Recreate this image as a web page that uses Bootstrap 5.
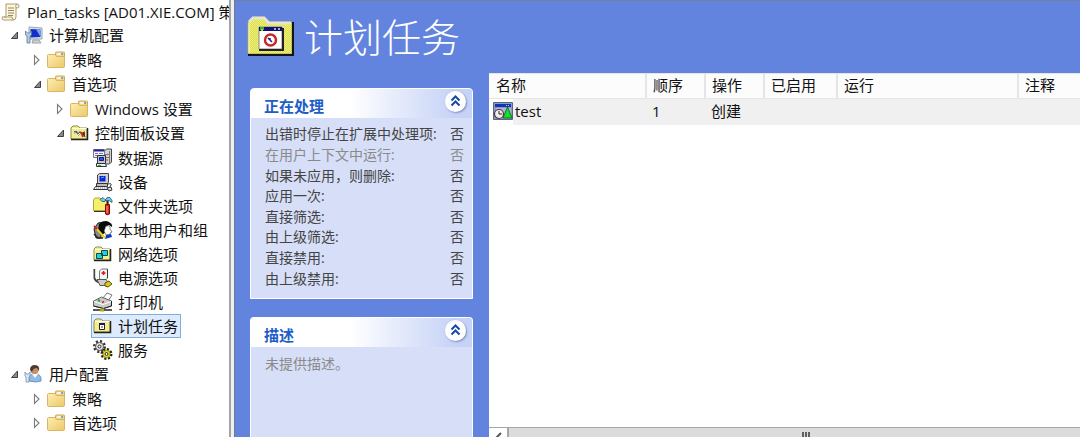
<!DOCTYPE html>
<html lang="zh-CN">
<head>
<meta charset="utf-8">
<meta name="viewport" content="width=device-width, initial-scale=1">
<title>计划任务</title>
<link rel="stylesheet" href="https://cdn.jsdelivr.net/npm/bootstrap@5.3.0/dist/css/bootstrap.min.css">
<script src="https://cdn.jsdelivr.net/npm/bootstrap@5.3.0/dist/js/bootstrap.bundle.min.js"></script>
<style>
  body { font-family: "Open Sans", "Noto Sans CJK SC", sans-serif; font-size: 15px; line-height: 20px; color: #111; background: #fff; }
  .console { height: 100vh; }

  /* navigation tree */
  .tree-pane { width: 229px; }
  .tree-root { height: 23px; padding-left: 1px; }
  .tree-root a { gap: 6px; }
  .branch { padding-left: 23px; padding-top: 1px; }
  .tree-top { padding-left: 7px; }
  .node { height: 24px; }
  .node a, .tree-root a { color: inherit; text-decoration: none; white-space: nowrap; }
  .node a { gap: 5px; height: 24px; padding: 0 2px 0 1px; border: 1px solid transparent; }
  .node a.current { background: #dcebfd; border-color: #84acdd; }
  .node svg.ico, .tree-root svg { width: 20px; height: 20px; flex: none; }
  .twist { width: 15px; height: 20px; flex: none; line-height: 0; }
  .split { width: 6px; background: #f0f0f0; border-left: 2px solid #a0a3a8; border-right: 1px solid #74787f; }

  /* extension view */
  .view { background: #6384de; border-top: 1px solid #75809f; }
  .view-head { height: 72px; padding-left: 12px; gap: 9px; }
  .view-head h1 { font-size: 39px; line-height: 48px; color: #fff; font-weight: 300; }
  .side { width: 254px; padding: 15px 16px 0 15px; gap: 18px; }
  .pane { background: #d6dff7; border: 1px solid #fff; border-radius: 4px 4px 0 0; }
  .pane-head { height: 29px; padding: 2px 6px 0 13px; background: linear-gradient(90deg, #fff 45%, #c6d3f7 92%); border-radius: 3px 3px 0 0; }
  .pane-head h2 { font-size: 15px; line-height: 20px; font-weight: 700; color: #215dc6; padding-top: 5px; }
  .fold { width: 21px; height: 21px; background: #fff; border-radius: 50%; box-shadow: 1px 1px 2px #7f8fbd; line-height: 0; }
  .props { height: 165px; margin: 6px 0 9px; font-size: 14px; line-height: 20px; color: #444; }
  .props th, .props td { padding: 0; font-weight: 400; }
  .props th { padding-left: 14px; white-space: nowrap; }
  .props td { width: 22px; }
  .muted { color: #8a8a8a; }
  .note { font-size: 14px; padding: 7px 14px; }

  /* item list */
  .items { background: #fff; min-width: 0; overflow: hidden; }
  .grid-list { table-layout: fixed; width: 100%; white-space: nowrap; }
  .grid-list th { height: 25px; padding: 0 6px 1px; line-height: 19px; font-weight: 400; background: #fcfcfc; border-top: 1px solid #e5e5e5; border-bottom: 1px solid #e5e5e5; border-right: 2px solid #e5e5e5; }
  .grid-list td { height: 26px; padding: 0 6px 2px; background: #f0f0f0; }
  .grid-list td.item-name { padding: 0 0 1px 4px; background: linear-gradient(90deg, #fff 24px, #f0f0f0 24px); }
  .grid-list td.item-name a { gap: 2px; }
  .grid-list th:first-child { padding-left: 7px; }
  .grid-list th:last-child { border-right: 0; }
  .c-name { width: 157px; } .c-num { width: 59px; } .c-on { width: 73px; } .c-run { width: 181px; }
  .hscroll { height: 10px; border-top: 1px solid #a6a6a6; background: #dcdcdc; overflow: hidden; }
  .hscroll button { width: 20px; background: #fff; line-height: 0; border-right: 2px solid #a6a6a6; }
  .scroll-thumb { padding-left: 24px; }
  .grip { width: 9px; height: 5px; background: repeating-linear-gradient(90deg, #606060 0 2px, #dcdcdc 2px 3px); }
</style>
</head>
<body>
<svg width="0" height="0" class="position-absolute" aria-hidden="true">
  <defs>
    <linearGradient id="gold" x1="0" y1="0" x2="1" y2="1"><stop offset="0" stop-color="#fdeeb0"/><stop offset="1" stop-color="#ecc869"/></linearGradient>
    <symbol id="folder" viewBox="0 0 20 20">
      <path d="M8.500 7V3q0-1 1-1h7q1 0 1 1v5h-9z" fill="#f0d68c" stroke="#cda95a"/><path d="M10 4h4" stroke="#fff" stroke-width="1.400"/><path d="M14 4h2" stroke="#4b9ad8" stroke-width="1.400"/>
      <path d="M.5 5.500q0-1 1-1H8l1.500 2h8v10q0 1-1 1h-15q-1 0-1-1z" fill="url(#gold)" stroke="#d9b566"/>
    </symbol>
    <symbol id="open" viewBox="0 0 12 20"><path d="M8.500 7v6.500H2.500z" fill="#8a8a8a" stroke="#404040"/></symbol>
    <symbol id="shut" viewBox="0 0 12 20"><path d="M2.500 5.500v9L7 10z" fill="#fff" stroke="#7a7a7a" stroke-width="1.100"/></symbol>
    <symbol id="yellow" viewBox="0 0 20 20">
      <path d="M1 16V5l2-2h5l2 2h7v11z" fill="#f1ee8e" stroke="#8d8b55"/><path d="M2 5.500h15" stroke="#fffff0"/><path d="M1 16.500h16.500V5" fill="none" stroke="#222" stroke-width="1.500"/>
    </symbol>
    <symbol id="chev" viewBox="0 0 21 21"><path d="M6.500 9.500l4-4 4 4M6.500 14.500l4-4 4 4" fill="none" stroke="#1749a8" stroke-width="2"/></symbol>
  </defs>
</svg>

<div class="console d-flex overflow-hidden">
  <nav class="tree-pane flex-shrink-0 overflow-hidden" aria-label="控制台树">
    <div class="tree-root d-flex align-items-center">
      <a href="#" class="d-flex align-items-center">
        <svg viewBox="0 0 20 20"><path d="M5 2h11q2 0 2 2t-2 2h-1v9q0 3-3 3H3q-2 0-2-2t2-1h2z" fill="#fff6d6" stroke="#a99b78"/><path d="M15 6q-1-3 1-4M3 15h8q0 3 2 3" fill="none" stroke="#a99b78"/><path d="M7 6h6M7 8.500h6M7 11h6M7 13.500h5" stroke="#8f8776"/></svg>
        <span>Plan_tasks [AD01.XIE.COM] 策略</span></a>
    </div>
    <ul class="tree-top list-unstyled mb-0">
      <li>
        <div class="node d-flex align-items-center"><button class="twist btn p-0 border-0" aria-label="折叠"><svg width="12" height="20"><use href="#open"/></svg></button>
          <a href="#" class="d-flex align-items-center"><svg class="ico" viewBox="0 0 20 20"><path d="M5 2l13 1v11l-13 0z" fill="#dce3ea" stroke="#9aa5b2"/><path d="M6.500 4l10 .6V12l-10 .4z" fill="#1330c8"/><path d="M12 4.300l4.500.3V12z" fill="#7aa5f4"/><path d="M9 15h6l2 3H8z" fill="#ccd1d8" stroke="#9da4ad"/><path d="M1.500 6v4l1.500 1v7h3v-7l1.500-1V6L5.500 8h-2z" fill="#b4cde2" stroke="#557799" stroke-width=".8"/></svg>计算机配置</a></div>
        <ul class="branch list-unstyled">
          <li class="node d-flex align-items-center"><button class="twist btn p-0 border-0" aria-label="展开"><svg width="12" height="20"><use href="#shut"/></svg></button><a href="#" class="d-flex align-items-center"><svg class="ico"><use href="#folder"/></svg>策略</a></li>
          <li>
            <div class="node d-flex align-items-center"><button class="twist btn p-0 border-0" aria-label="折叠"><svg width="12" height="20"><use href="#open"/></svg></button><a href="#" class="d-flex align-items-center"><svg class="ico"><use href="#folder"/></svg>首选项</a></div>
            <ul class="branch list-unstyled">
              <li class="node d-flex align-items-center"><button class="twist btn p-0 border-0" aria-label="展开"><svg width="12" height="20"><use href="#shut"/></svg></button><a href="#" class="d-flex align-items-center"><svg class="ico"><use href="#folder"/></svg>Windows 设置</a></li>
              <li>
                <div class="node d-flex align-items-center"><button class="twist btn p-0 border-0" aria-label="折叠"><svg width="12" height="20"><use href="#open"/></svg></button><a href="#" class="d-flex align-items-center"><svg class="ico" viewBox="0 0 20 20"><use href="#yellow"/><path d="M4 8h3l1 2 2-2 2 2 3-2v4l-2 1-2-3-3 3-1-3-3 1z" fill="#5b5b52"/><path d="M11 9l2 5" stroke="#d22" stroke-width="2"/><path d="M4 10h2M7 13l3-3" stroke="#fff"/><path d="M13 9l2 5" stroke="#222"/></svg>控制面板设置</a></div>
                <ul class="branch list-unstyled">
                  <li class="node d-flex align-items-center"><span class="twist"></span><a href="#" class="d-flex align-items-center"><svg class="ico" viewBox="0 0 20 20"><path d="M11.500 3l2-2h5v13l-2 2h-5z" fill="#d4d4d4" stroke="#444"/><path d="M12 6.500h4M12 9.500h4" stroke="#777"/><path d="M16.500 3v12" stroke="#777"/><path d="M13 12h2" stroke="#d22"/><path d="M.5 1.500h11v8H.5z" fill="#f4f4f4" stroke="#778"/><path d="M1 2.500h10" stroke="#2222a8" stroke-width="2"/><path d="M2 5.500h3m1 0h4M2 7.500h3" stroke="#77b"/><path d="M4.500 7.500h8v8h-8z" fill="#c8c8c8" stroke="#333"/><path d="M6.500 9.500h4v3h-4z" fill="#16d" stroke="#11a"/><path d="M3.500 15.500h9l1 3h-10z" fill="#eee" stroke="#333"/><path d="M5 17.500h3" stroke="#0b0"/></svg>数据源</a></li>
                  <li class="node d-flex align-items-center"><span class="twist"></span><a href="#" class="d-flex align-items-center"><svg class="ico" viewBox="0 0 20 20"><path d="M4.500 3l2-1.500h9v9l-2 1.500h-9z" fill="#d0d0d0" stroke="#444"/><path d="M6.500 4h6v5.500h-6z" fill="#1122dd"/><path d="M8 6l3-1" stroke="#35c8ef"/><path d="M3.500 11.500h11v3h-11z" fill="#bbb" stroke="#333"/><path d="M2.500 14.500h11l2 3H.5z" fill="#eee" stroke="#333"/><path d="M3 16h9" stroke="#888" stroke-dasharray="1 1"/><path d="M15 12q4-1 3 1t-2 3" fill="none" stroke="#333"/><path d="M14 16l4-1 1 3-3 1z" fill="#ddd" stroke="#333"/></svg>设备</a></li>
                  <li class="node d-flex align-items-center"><span class="twist"></span><a href="#" class="d-flex align-items-center"><svg class="ico" viewBox="0 0 20 20"><path d="M.5 14.500V4l1.500-2h5l2 2h6v10.500z" fill="#f5ef6a" stroke="#b5a63c"/><path d="M1 15.500h12" stroke="#333"/><path d="M7 3.500l3-2 2 2h1l1-2h3l2 3v2l-3-2h-4v1H9z" fill="#7fc4e2" stroke="#155b80" stroke-width=".8"/><path d="M14.500 5v4" stroke="#222" stroke-width="2"/><path d="M12.500 8.500h4v9.500q-2 1.500-4 0z" fill="#e32616" stroke="#7d0b05"/><path d="M14 10v7" stroke="#ff9d91"/></svg>文件夹选项</a></li>
                  <li class="node d-flex align-items-center"><span class="twist"></span><a href="#" class="d-flex align-items-center"><svg class="ico" viewBox="0 0 20 20"><path d="M1 9l4-6 6-1-3 7v9H3z" fill="#888" stroke="#222"/><path d="M6 4q5-5 10-2 4 2 3 5l-3-2-4 2 1 5-4 3-4-4z" fill="#090909"/><path d="M13 6q5-1 4 3l2 3-2 1v2h-4l-2-4z" fill="#fff" stroke="#333" stroke-width=".6"/><path d="M13 15l5-1 1 3-7 2z" fill="#1538b5"/><path d="M3 8l9 10" stroke="#e9d61b" stroke-width="2"/><path d="M1 6l3 3" stroke="#d71d1d" stroke-width="2"/><path d="M1 14l4 4h5" fill="none" stroke="#222" stroke-width="1.500"/></svg>本地用户和组</a></li>
                  <li class="node d-flex align-items-center"><span class="twist"></span><a href="#" class="d-flex align-items-center"><svg class="ico" viewBox="0 0 20 20"><use href="#yellow"/><path d="M8.500 6.500h6v5h-6zM3.500 9.500h6v5h-6z" fill="#19d5e3" stroke="#17434a"/></svg>网络选项</a></li>
                  <li class="node d-flex align-items-center"><span class="twist"></span><a href="#" class="d-flex align-items-center"><svg class="ico" viewBox="0 0 20 20"><path d="M1.500 1v9q1 4 5 4" fill="none" stroke="#444" stroke-width="2"/><path d="M2.500 1v9" stroke="#ddd"/><path d="M6.500 3l2-2h6v9l-2 2h-6z" fill="#f4f4f4" stroke="#777"/><path d="M14.500 1v9" stroke="#333"/><path d="M8.500 5h4M10.500 3v4" stroke="#e01414" stroke-width="1.500"/><path d="M4 11.500h9l2 3-3 3H7z" fill="#ccc" stroke="#555"/><path d="M12 15l4-2 3 3-4 3-3-1z" fill="#d8c91f" stroke="#5d5709"/></svg>电源选项</a></li>
                  <li class="node d-flex align-items-center"><span class="twist"></span><a href="#" class="d-flex align-items-center"><svg class="ico" viewBox="0 0 20 20"><path d="M10 6l4-5 5 2-4 6z" fill="#fff" stroke="#777"/><path d="M.5 9l8-4 10 4v5l-8 2.500-10-2.500z" fill="#c9c9c9" stroke="#666"/><path d="M1 9.500l9 3 8-3" fill="none" stroke="#fff"/><path d="M.5 14l10 2.500 8-2.500V9" fill="none" stroke="#222"/><path d="M5 8l2 1" stroke="#19b32a" stroke-width="2"/><path d="M9 10.500l2-1" stroke="#d22" stroke-width="1.500"/><path d="M0 18h19" stroke="#222" stroke-width="1.500"/><path d="M7 18h4" stroke="#a8ad12" stroke-width="3"/></svg>打印机</a></li>
                  <li class="node d-flex align-items-center"><span class="twist"></span><a href="#" class="current d-flex align-items-center" aria-current="page"><svg class="ico" viewBox="0 0 20 20"><use href="#yellow"/><path d="M6.500 7.500h5v6h-5z" fill="#fff" stroke="#222"/><path d="M6 8h6" stroke="#14148c" stroke-width="2"/><path d="M8 10h2v2H8z" fill="#d88"/></svg>计划任务</a></li>
                  <li class="node d-flex align-items-center"><span class="twist"></span><a href="#" class="d-flex align-items-center"><svg class="ico" viewBox="0 0 20 20"><circle cx="6.500" cy="6.500" r="5" fill="#eee" stroke="#333" stroke-width="3" stroke-dasharray="2 1.900"/><circle cx="6.500" cy="6.500" r="4" fill="#e6e6e6" stroke="#555"/><circle cx="6.500" cy="6.500" r="1.500" fill="#fff" stroke="#222"/><circle cx="13.500" cy="14" r="4.500" fill="#e7df2c" stroke="#222" stroke-width="3" stroke-dasharray="2 1.500"/><circle cx="13.500" cy="14" r="3.500" fill="#efe73a" stroke="#a39b18"/><circle cx="13.500" cy="14" r="1.500" fill="#fff" stroke="#222"/></svg>服务</a></li>
                </ul>
              </li>
            </ul>
          </li>
        </ul>
      </li>
      <li>
        <div class="node d-flex align-items-center"><button class="twist btn p-0 border-0" aria-label="折叠"><svg width="12" height="20"><use href="#open"/></svg></button>
          <a href="#" class="d-flex align-items-center"><svg class="ico" viewBox="0 0 20 20"><path d="M5 17v-3q0-4 6-4 6 0 6 5v2q-5 2-12 0z" fill="#8fbbe8" stroke="#6c97c5"/><path d="M8 10l3 4 3-4z" fill="#fff"/><circle cx="10.500" cy="6" r="4" fill="#c88f66"/><path d="M6 6q0-5 5-5t4 6l-2-3q-4 0-5 4z" fill="#4b3a31"/><path d="M1 8v4l1 1v5h3v-5l1-1V8l-1.500 2h-2z" fill="#dbe6ee" stroke="#7891a7" stroke-width=".8"/></svg>用户配置</a></div>
        <ul class="branch list-unstyled">
          <li class="node d-flex align-items-center"><button class="twist btn p-0 border-0" aria-label="展开"><svg width="12" height="20"><use href="#shut"/></svg></button><a href="#" class="d-flex align-items-center"><svg class="ico"><use href="#folder"/></svg>策略</a></li>
          <li class="node d-flex align-items-center"><button class="twist btn p-0 border-0" aria-label="展开"><svg width="12" height="20"><use href="#shut"/></svg></button><a href="#" class="d-flex align-items-center"><svg class="ico"><use href="#folder"/></svg>首选项</a></li>
        </ul>
      </li>
    </ul>
  </nav>
  <div class="split flex-shrink-0"></div>

  <main class="view d-flex flex-column flex-grow-1 overflow-hidden">
    <header class="view-head d-flex align-items-center flex-shrink-0">
      <svg width="48" height="42" viewBox="0 0 48 42" aria-hidden="true">
        <defs><pattern id="dots" width="2" height="2" patternUnits="userSpaceOnUse"><path d="M0 0h2v2H0z" fill="#eef07c"/><path d="M0 0h1v1H0zM1 1h1v1H1z" fill="#dcdc50"/></pattern></defs>
        <path d="M1 38V6l3-3 2-2h11l5 5h23v32z" fill="url(#dots)" stroke="#a2a25c"/>
        <path d="M2 6l4-4h11l5 5h22" fill="none" stroke="#e4e4d0" stroke-width="3"/><path d="M2 7v30" stroke="#f7f7cf"/><path d="M1 39h45V6" fill="none" stroke="#151515" stroke-width="2"/>
        <path d="M12 11h23v22H12z" fill="#fff" stroke="#888"/><path d="M12 34h24V12" fill="none" stroke="#222" stroke-width="2"/>
        <path d="M12 11h23v4H12z" fill="#10107c"/><path d="M13 11h4v3h-4z" fill="#28b54a"/><path d="M14 13h2v2h-2z" fill="#e7b91f"/><path d="M27 13h2m2 0h2" stroke="#aab" stroke-width="2"/>
        <circle cx="23.500" cy="24" r="5.500" fill="#fff" stroke="#c52a2a" stroke-width="2.500"/><path d="M21 22l4 4M23 22v2" stroke="#182a90" stroke-width="1.500"/>
      </svg>
      <h1 class="mb-0">计划任务</h1>
    </header>
    <div class="d-flex flex-grow-1 overflow-hidden">
      <aside class="side d-flex flex-column flex-shrink-0">
        <section class="pane">
          <div class="pane-head d-flex justify-content-between align-items-start"><h2 class="mb-0">正在处理</h2><button class="fold btn p-0 border-0" aria-label="折叠正在处理"><svg width="21" height="21"><use href="#chev"/></svg></button></div>
          <table class="props w-100">
            <tbody>
              <tr><th scope="row">出错时停止在扩展中处理项:</th><td>否</td></tr>
              <tr class="muted"><th scope="row">在用户上下文中运行:</th><td>否</td></tr>
              <tr><th scope="row">如果未应用，则删除:</th><td>否</td></tr>
              <tr><th scope="row">应用一次:</th><td>否</td></tr>
              <tr><th scope="row">直接筛选:</th><td>否</td></tr>
              <tr><th scope="row">由上级筛选:</th><td>否</td></tr>
              <tr><th scope="row">直接禁用:</th><td>否</td></tr>
              <tr><th scope="row">由上级禁用:</th><td>否</td></tr>
            </tbody>
          </table>
        </section>
        <section class="pane flex-grow-1 border-bottom-0">
          <div class="pane-head d-flex justify-content-between align-items-start"><h2 class="mb-0">描述</h2><button class="fold btn p-0 border-0" aria-label="折叠描述"><svg width="21" height="21"><use href="#chev"/></svg></button></div>
          <p class="note muted mb-0">未提供描述。</p>
        </section>
      </aside>
      <section class="items d-flex flex-column flex-grow-1">
        <table class="grid-list">
          <colgroup><col class="c-name"><col class="c-num"><col class="c-num"><col class="c-on"><col class="c-run"><col></colgroup>
          <thead><tr><th>名称</th><th>顺序</th><th>操作</th><th>已启用</th><th>运行</th><th>注释</th></tr></thead>
          <tbody><tr>
            <td class="item-name"><a href="#" class="d-flex align-items-center text-reset text-decoration-none"><svg width="20" height="18" viewBox="0 0 20 18" aria-hidden="true"><path d="M.5.500h19v17H.5z" fill="#8a9db8" stroke="#53698a"/><path d="M2 2h16v3H2z" fill="#1034b8"/><path d="M13 3.500h4" stroke="#b7caf2" stroke-dasharray="1 1"/><path d="M3 6h15v10H3z" fill="#a7b9d3"/><circle cx="6" cy="12" r="4.500" fill="#eee" stroke="#642b3c" stroke-width="1.200"/><path d="M6 9v3h3" fill="none" stroke="#222"/><path d="M14.500 5L19 16H10z" fill="#15df2b" stroke="#0b5b17" stroke-width=".8"/></svg>test</a></td>
            <td>1</td><td>创建</td><td></td><td></td><td></td>
          </tr></tbody>
        </table>
        <div class="hscroll d-flex mt-auto flex-shrink-0">
          <button class="btn p-0 border-top-0 border-start-0 border-bottom-0 rounded-0" aria-label="向左滚动"><svg width="17" height="10" viewBox="0 0 17 10"><path d="M11 5L7 9l4 4" fill="none" stroke="#555" stroke-width="2"/></svg></button>
          <div class="scroll-thumb flex-grow-1 d-flex justify-content-center align-items-end"><span class="grip"></span></div>
        </div>
      </section>
    </div>
  </main>
</div>
</body>
</html>
